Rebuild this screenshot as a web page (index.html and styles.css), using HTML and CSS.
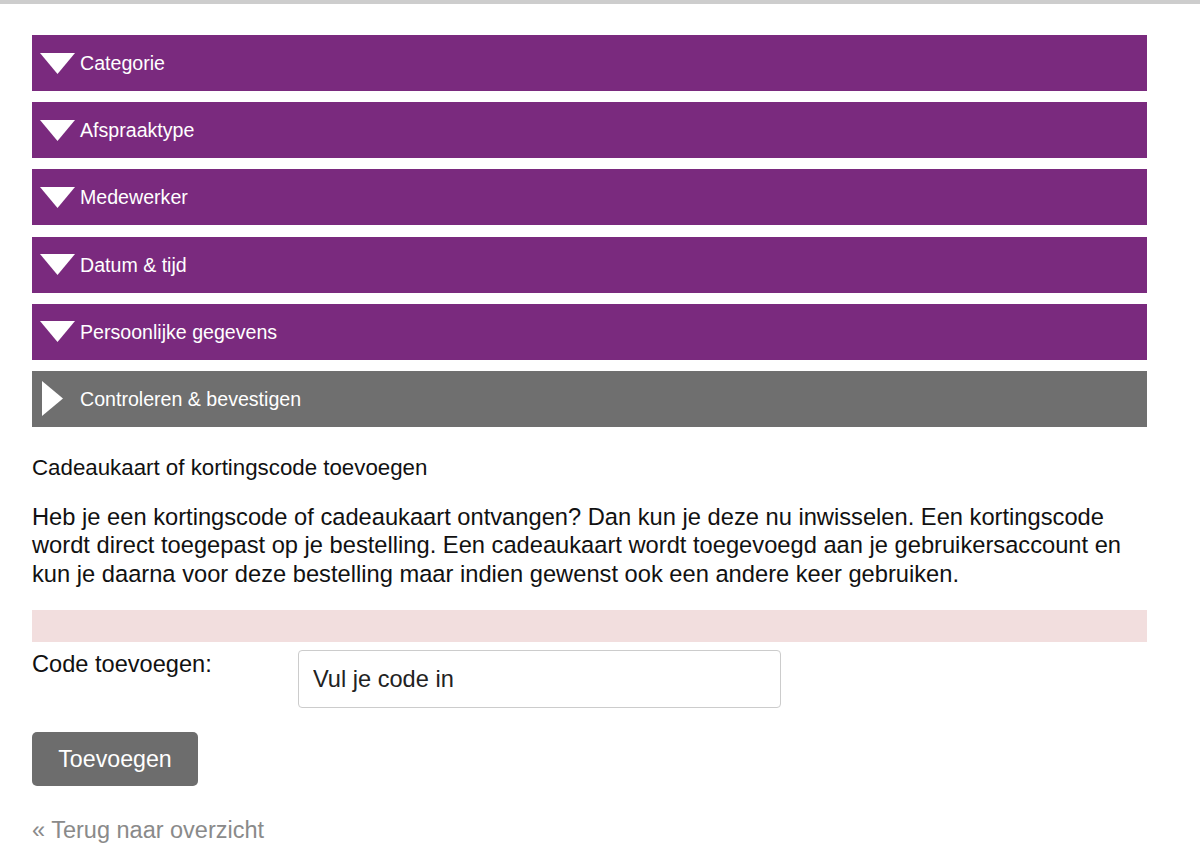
FILE: index.html
```html
<!DOCTYPE html>
<html lang="nl">
<head>
<meta charset="utf-8">
<title>Afspraak maken</title>
<link rel="stylesheet" href="styles.css">
</head>
<body>
<div class="page">
  <div class="steps">
    <div class="step">
      <span class="icon"><svg class="tri-down" width="35" height="21" viewBox="0 0 35 21"><polygon points="0,0 35,0 17.5,21" fill="#fff"/></svg></span>
      <span class="step-label">Categorie</span>
    </div>
    <div class="step">
      <span class="icon"><svg class="tri-down" width="35" height="21" viewBox="0 0 35 21"><polygon points="0,0 35,0 17.5,21" fill="#fff"/></svg></span>
      <span class="step-label">Afspraaktype</span>
    </div>
    <div class="step">
      <span class="icon"><svg class="tri-down" width="35" height="21" viewBox="0 0 35 21"><polygon points="0,0 35,0 17.5,21" fill="#fff"/></svg></span>
      <span class="step-label">Medewerker</span>
    </div>
    <div class="step">
      <span class="icon"><svg class="tri-down" width="35" height="21" viewBox="0 0 35 21"><polygon points="0,0 35,0 17.5,21" fill="#fff"/></svg></span>
      <span class="step-label">Datum &amp; tijd</span>
    </div>
    <div class="step">
      <span class="icon"><svg class="tri-down" width="35" height="21" viewBox="0 0 35 21"><polygon points="0,0 35,0 17.5,21" fill="#fff"/></svg></span>
      <span class="step-label">Persoonlijke gegevens</span>
    </div>
    <div class="step step-inactive">
      <span class="icon"><svg class="tri-right" width="21" height="35" viewBox="0 0 21 35"><polygon points="0,0 21,17.5 0,35" fill="#fff"/></svg></span>
      <span class="step-label">Controleren &amp; bevestigen</span>
    </div>
  </div>

  <h2 class="section-title">Cadeaukaart of kortingscode toevoegen</h2>
  <p class="intro">Heb je een kortingscode of cadeaukaart ontvangen? Dan kun je deze nu inwisselen. Een kortingscode wordt direct toegepast op je bestelling. Een cadeaukaart wordt toegevoegd aan je gebruikersaccount en kun je daarna voor deze bestelling maar indien gewenst ook een andere keer gebruiken.</p>

  <div class="alert"></div>

  <div class="form-row">
    <label class="form-label" for="code">Code toevoegen:</label>
    <input class="form-input" id="code" type="text" placeholder="Vul je code in">
  </div>

  <button class="btn" type="button">Toevoegen</button>

  <a class="back-link" href="#">« Terug naar overzicht</a>
</div>
</body>
</html>
```

FILE: styles.css
```css
html, body {
  margin: 0;
  padding: 0;
  background: #fff;
}

body {
  border-top: 4px solid #cdcdcd;
  font-family: "Liberation Sans", Arial, Helvetica, sans-serif;
  color: #111;
}

.page {
  width: 1115px;
  padding: 31px 0 0 32px;
  display: flex;
  flex-direction: column;
  align-items: flex-start;
}

.steps {
  width: 100%;
  display: flex;
  flex-direction: column;
  gap: 11.2px;
}

.step {
  height: 56px;
  background: #7a2a7e;
  color: #fff;
  display: flex;
  align-items: center;
  padding-left: 8px;
}

.step-inactive {
  background: #6f6f6f;
}

.icon {
  width: 40px;
  display: flex;
  align-items: center;
}

.tri-down {
  display: block;
}

.tri-right {
  display: block;
  margin-left: 2px;
}

.step-label {
  font-size: 19.6px;
  line-height: 24px;
}

.section-title {
  margin: 28px 0 0;
  font-size: 22.3px;
  line-height: 26px;
  font-weight: normal;
}

.intro {
  margin: 22px 0 0;
  font-size: 23.7px;
  line-height: 28.5px;
}

.alert {
  width: 100%;
  height: 32px;
  margin-top: 22px;
  background: #f2dede;
}

.form-row {
  display: flex;
  align-items: flex-start;
  margin-top: 8px;
}

.form-label {
  width: 266px;
  font-size: 23.6px;
  line-height: 28px;
}

.form-input {
  box-sizing: border-box;
  width: 483px;
  height: 58px;
  border: 1px solid #cccccc;
  border-radius: 4px;
  padding: 0 14px;
  font-family: "Liberation Sans", Arial, Helvetica, sans-serif;
  font-size: 23.6px;
  color: #222;
  outline: none;
}

.form-input::placeholder {
  color: #222;
  opacity: 1;
}

.btn {
  margin-top: 24px;
  width: 166px;
  height: 54px;
  border: none;
  border-radius: 5px;
  background: #6d6d6d;
  color: #fff;
  font-family: "Liberation Sans", Arial, Helvetica, sans-serif;
  font-size: 23.2px;
  padding: 0;
  cursor: pointer;
}

.back-link {
  margin-top: 30px;
  font-size: 23.5px;
  line-height: 28px;
  color: #8a8a8a;
  text-decoration: none;
}
```
